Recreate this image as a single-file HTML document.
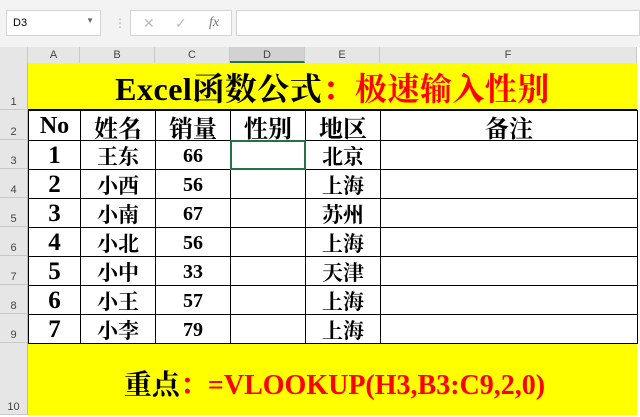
<html><head><style>
body{margin:0;width:640px;height:417px;background:#fff;position:relative;overflow:hidden;font-family:"Liberation Serif","Noto Serif CJK SC",serif}
div{position:absolute;box-sizing:border-box}
.c{font-weight:bold;font-size:20px;display:flex;align-items:center;justify-content:center;color:#000;padding-top:2px}
.rh{left:0;width:28px;background:#e6e6e6;border-bottom:1px solid #c8c8c8;border-right:1px solid #bbb;font:11px "Liberation Sans",sans-serif;color:#444;display:flex;align-items:flex-end;justify-content:center;padding-bottom:1px}
.ch{top:47px;height:16px;background:#e6e6e6;border-right:1px solid #c8c8c8;font:11px "Liberation Sans",sans-serif;color:#444;text-align:center;line-height:16px}
</style></head><body>
<div style="left:0;top:0;width:640px;height:47px;background:#f3f3f3"></div>
<div style="left:6px;top:10px;width:95px;height:26px;background:#fff;border:1px solid #d4d4d4;font:11px 'Liberation Sans',sans-serif;padding:6px 6px">D3<span style="position:absolute;right:6px;top:5px;font-size:8px;color:#666">▼</span></div>
<div style="left:114px;top:16px;color:#aaa;font:12px sans-serif">⋮</div>
<div style="left:130px;top:10px;width:102px;height:26px;background:#fff;border:1px solid #d4d4d4;color:#bbb;font:14px 'Liberation Sans',sans-serif"><span style="position:absolute;left:12px;top:4px">✕</span><span style="position:absolute;left:44px;top:4px">✓</span><span style="position:absolute;left:78px;top:4px;font-style:italic;font-family:'Liberation Serif';color:#777">fx</span></div>
<div style="left:236px;top:10px;width:404px;height:26px;background:#fff;border:1px solid #d4d4d4"></div>
<div style="left:0;top:47px;width:28px;height:16px;background:#e6e6e6;border-right:1px solid #c8c8c8"></div>
<div class="ch" style="left:28px;width:52px">A</div>
<div class="ch" style="left:80px;width:75px">B</div>
<div class="ch" style="left:155px;width:75px">C</div>
<div class="ch" style="left:230px;width:75px;background:#d2d2d2;border-bottom:2px solid #217346">D</div>
<div class="ch" style="left:305px;width:75px">E</div>
<div class="ch" style="left:380px;width:257px">F</div>
<div class="rh" style="top:63px;height:47px">1</div>
<div class="rh" style="top:110px;height:30px">2</div>
<div class="rh" style="top:140px;height:29px">3</div>
<div class="rh" style="top:169px;height:29px">4</div>
<div class="rh" style="top:198px;height:29px">5</div>
<div class="rh" style="top:227px;height:29px">6</div>
<div class="rh" style="top:256px;height:29px">7</div>
<div class="rh" style="top:285px;height:29px">8</div>
<div class="rh" style="top:314px;height:29px">9</div>
<div class="rh" style="top:343px;height:72px">10</div>
<div class="c" style="left:28px;top:63px;width:609px;height:47px;background:#ff0;font-size:32px;letter-spacing:0.5px;border-bottom:1px solid #000;padding-left:0px">Excel函数公式<span style="color:#f00">：极速输入性别</span></div>
<div class="c" style="left:28px;top:343px;width:609px;height:72px;background:#ff0;font-size:28px;border-top:1px solid #000;padding-top:6px;padding-left:4px">重点<span style="color:#f00">：=VLOOKUP(H3,B3:C9,2,0)</span></div>
<div id="g"></div>
<script>
var L=[28,80,155,230,305,380,637],T=[110,140,169,198,227,256,285,314,343];
var d=[["No","姓名","销量","性别","地区","备注"],["1","王东","66","","北京",""],["2","小西","56","","上海",""],["3","小南","67","","苏州",""],["4","小北","56","","上海",""],["5","小中","33","","天津",""],["6","小王","57","","上海",""],["7","小李","79","","上海",""]];
var h="";
for(var r=0;r<8;r++)for(var c=0;c<6;c++){var fs=r==0?24:(c==0?25:(c==2?20:21));
h+='<div class="c" style="left:'+L[c]+'px;top:'+T[r]+'px;width:'+(L[c+1]-L[c]+1)+'px;height:'+(T[r+1]-T[r]+1)+'px;border:1px solid #000;font-size:'+fs+'px">'+d[r][c]+'</div>';}
h+='<div style="left:230px;top:140px;width:76px;height:30px;border:2px solid #217346"></div>';
document.getElementById("g").outerHTML=h;
</script>
</body></html>
